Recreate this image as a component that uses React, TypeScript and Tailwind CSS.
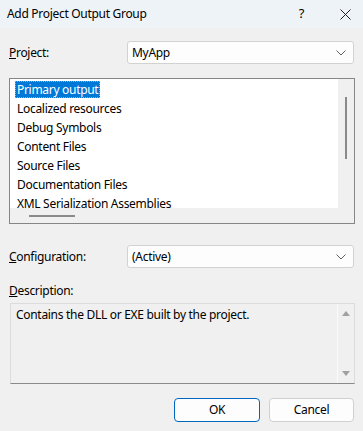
import React from "react";

const font = { fontFamily: '"Segoe UI", "Noto Sans", sans-serif', letterSpacing: "-0.3px" };

const items = [
  "Primary output",
  "Localized resources",
  "Debug Symbols",
  "Content Files",
  "Source Files",
  "Documentation Files",
  "XML Serialization Assemblies",
];

const Chevron = () => (
  <svg width="10" height="6" viewBox="0 0 10 6" className="mr-[3px]">
    <path d="M0.5 0.5 L5 5 L9.5 0.5" fill="none" stroke="#606060" strokeWidth="1" />
  </svg>
);

const Combo = ({ value }: { value: string }) => (
  <div className="flex h-[23px] w-[227px] items-center justify-between rounded-[3px] border border-[#d2d2d2] bg-[#fdfdfd] pl-[4px] pr-[4px] text-[12px] text-black">
    <span>{value}</span>
    <Chevron />
  </div>
);

const App = () => {
  return (
    <div className="flex h-[431px] w-[363px] flex-col bg-[#f0f0f0] text-[12px] text-black" style={font}>
      {/* title bar */}
      <div className="flex h-[28px] items-center justify-between bg-[#eef3f8] pl-[7px] pr-[12px]">
        <span className="text-[12px]">Add Project Output Group</span>
        <div className="flex items-center gap-[36px]">
          <span className="text-[13px]">?</span>
          <svg width="11" height="11" viewBox="0 0 11 11">
            <path d="M0.5 0.5 L10.5 10.5 M10.5 0.5 L0.5 10.5" stroke="#222" strokeWidth="1" />
          </svg>
        </div>
      </div>

      <div className="flex flex-col px-[9px] pt-[13px]">
        <div className="flex items-center justify-between">
          <span>
            <u>P</u>roject:
          </span>
          <Combo value="MyApp" />
        </div>

        {/* list box */}
        <div className="mt-[14px] flex h-[146px] w-[346px] flex-col border border-[#868686] bg-[#f0f0f0]">
          <div className="flex h-[129px]">
            <div className="flex w-[328px] flex-col overflow-hidden bg-white pl-[5px] pt-[1px]">
              {items.map((it, i) => (
                <div key={it} className="flex h-[19px] shrink-0 items-center">
                  {i === 0 ? (
                    <span className="border border-dotted border-[#f0a030] bg-[#0078d7] px-[1px] leading-[15px] text-white">
                      {it}
                    </span>
                  ) : (
                    <span className="px-[2px]">{it}</span>
                  )}
                </div>
              ))}
            </div>
            <div className="flex flex-1 justify-center pt-[18px]">
              <div className="h-[62px] w-[2px] bg-[#8a8a8a]" />
            </div>
          </div>
          <div className="flex flex-1 items-center pl-[19px]">
            <div className="h-[2px] w-[46px] bg-[#8a8a8a]" />
          </div>
        </div>

        <div className="mt-[21px] flex items-center justify-between">
          <span>
            <u>C</u>onfiguration:
          </span>
          <Combo value="(Active)" />
        </div>

        <div className="mt-[15px] leading-[16px]">
          <u>D</u>escription:
        </div>

        {/* description box */}
        <div className="ml-[1px] mt-[4px] flex h-[81px] w-[345px] border border-b-[#8a8a8a] border-l-[#dcdcdc] border-r-[#dcdcdc] border-t-[#dcdcdc] bg-[#f0f0f0]">
          <div className="flex-1 pl-[5px] pt-[2px]">Contains the DLL or EXE built by the project.</div>
          <div className="flex w-[17px] flex-col items-center justify-between border-l border-l-[#fafafa] py-[7px]">
            <svg width="8" height="5" viewBox="0 0 8 5">
              <path d="M0 5 L4 0 L8 5 Z" fill="#a0a0a0" />
            </svg>
            <svg width="8" height="5" viewBox="0 0 8 5">
              <path d="M0 0 L8 0 L4 5 Z" fill="#a0a0a0" />
            </svg>
          </div>
        </div>

        <div className="mt-[14px] flex justify-end gap-[9px]">
          <button className="h-[24px] w-[86px] rounded-[4px] border border-[#0067c0] bg-[#fdfdfd] text-[12px]">
            OK
          </button>
          <button className="h-[24px] w-[85px] rounded-[4px] border border-[#d0d0d0] bg-[#fdfdfd] text-[12px]">
            Cancel
          </button>
        </div>
      </div>
    </div>
  );
};

export default App;
